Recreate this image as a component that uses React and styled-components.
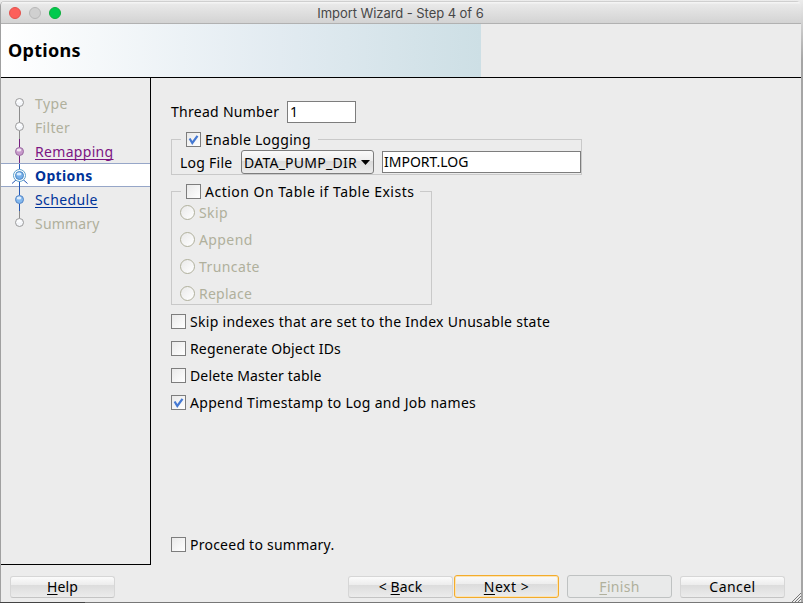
import React from "react";
import styled, { createGlobalStyle, css } from "styled-components";

const Global = createGlobalStyle`
  *, *::before, *::after { box-sizing: border-box; }
  html, body { margin: 0; padding: 0; overflow: hidden; }
  body { background: #cfcfcf; font: 14px/18px "Noto Sans", sans-serif; color: #000; }
`;

const Desktop = styled.div`
  width: 803px;
  height: 603px;
  padding: 1px 2px 1px 0;
  background: linear-gradient(90deg, #444 0 85px, #777 85px) 0 602px / 100% 1px no-repeat,
    linear-gradient(#ececec, #a5a5a5 60px);
`;

const Window = styled.div`
  display: flex;
  flex-direction: column;
  width: 801px;
  height: 601px;
  background: #ececec;
  border-left: 1px solid #a0a0a0;
  border-radius: 5px 5px 0 0;
  overflow: hidden;
  position: relative;
`;

const TitleBar = styled.header`
  flex: none;
  display: grid;
  grid-template-columns: 1fr auto 1fr;
  align-items: center;
  height: 23px;
  padding: 1px 0 0 8px;
  background: linear-gradient(#cfcfcf 0 1px, #f4f4f4 1px 2px, #e9e9e9 3px, #d3d3d3);
  border-bottom: 1px solid #b1b1b1;
`;

const Lights = styled.div`
  display: flex;
  gap: 8px;
`;

const Light = styled.span`
  width: 12px;
  height: 12px;
  border-radius: 50%;
  background: ${(p) => p.$fill};
  border: 1px solid ${(p) => p.$edge};
`;

const WindowTitle = styled.div`
  font: 13px/18px Inter, sans-serif;
  letter-spacing: -0.06px;
  color: #474747;
  margin-right: 9px;
`;

const Banner = styled.div`
  flex: none;
  height: 54px;
  padding: 16px 0 0 7px;
  border-bottom: 1px solid #000;
  background: linear-gradient(90deg, #fff, #e2ebf1 58%, #cddfe5) 0 0 / 480px 100% no-repeat;
`;

const Heading = styled.h1`
  margin: 0;
  font: 700 18px/20px "Noto Sans", sans-serif;
  letter-spacing: 0.3px;
`;

const Body = styled.div`
  flex: none;
  display: flex;
  height: 487px;
`;

const Nav = styled.nav`
  width: 150px;
  padding-top: 13px;
  border: solid #000;
  border-width: 0 1px 1px 0;
`;

const Step = styled.div`
  display: flex;
  height: 24px;
  color: ${(p) => p.$color || "#b0b09c"};
  ${(p) =>
    p.$current &&
    css`
      background: #fff;
      border: solid #96a6c8;
      border-width: 1px 0;
      font-weight: 700;
      svg { margin-top: -1px; }
      span { padding-top: 3px; }
    `}
`;

const StepName = styled.span`
  padding-top: 4px;
  letter-spacing: ${(p) => p.$ls || 0}px;
  text-decoration: ${(p) => (p.$link ? "underline" : "none")};
  text-underline-offset: 2px;
  text-decoration-thickness: 1px;
  text-decoration-skip-ink: none;
`;

const Marker = styled.svg`
  flex: none;
  width: 34px;
  height: 24px;
`;

const Main = styled.main`
  flex: 1;
  padding: 23px 0 0 20px;
`;

const Text = styled.span`
  white-space: pre;
  letter-spacing: ${(p) => p.$ls || 0}px;
  padding-top: ${(p) => (p.$low ? 2 : 0)}px;
`;

const Row = styled.div`
  display: flex;
  align-items: center;
  height: ${(p) => p.$h || 27}px;
  margin-top: ${(p) => p.$mt || 0}px;
  color: ${(p) => (p.$disabled ? "#b0b09c" : "#000")};
`;

const Label = styled(Text)`
  flex: none;
  width: ${(p) => p.$w}px;
`;

const Field = styled.div`
  width: ${(p) => p.$w}px;
  height: 22px;
  padding: 1px 0 0 ${(p) => p.$pl}px;
  margin-left: ${(p) => p.$ml || 0}px;
  background: #fff;
  border: 1px solid #7d7d7d;
`;

const Group = styled.fieldset`
  width: ${(p) => p.$w}px;
  height: ${(p) => p.$h}px;
  margin: 7px 0 0;
  padding: 0 0 0 8px;
  min-width: 0;
  border: 1px solid #c9c9c9;
`;

const Legend = styled.legend`
  display: flex;
  align-items: center;
  height: 18px;
  margin-left: 1px;
  padding: 0 0 0 5px;
  width: ${(p) => p.$w}px;
`;

const Box = styled.span`
  flex: none;
  display: flex;
  width: 15px;
  height: 15px;
  margin-right: 4px;
  border: 1px solid #7d7d7d;
  background: linear-gradient(135deg, #e9e9e9, #fff);
`;

const Radio = styled.span`
  flex: none;
  width: 15px;
  height: 15px;
  margin-right: 4px;
  border-radius: 50%;
  border: 1px solid #b0b09c;
  background: linear-gradient(135deg, #e9e9e9, #fff);
`;

const RadioList = styled.div`
  display: flex;
  flex-direction: column;
  gap: 2px;
`;

const Combo = styled.div`
  display: flex;
  align-items: center;
  width: 133px;
  height: 24px;
  padding-left: 2px;
  border: 1px solid #7d7d7d;
  border-radius: 3px;
  background: linear-gradient(#fafafa, #ececec 45%, #dadada 46%, #ebebeb);
  svg { margin-left: auto; margin-right: 3px; }
`;

const Footer = styled.footer`
  flex: 1;
  display: flex;
  align-items: flex-start;
  padding: 11px 0 0 9px;
`;

const Button = styled.button`
  width: 105px;
  height: 22px;
  padding: 0;
  margin: 0 0 0 ${(p) => p.$ml || 0}px;
  font: 14px/18px "Noto Sans", sans-serif;
  letter-spacing: ${(p) => p.$ls || 0}px;
  color: #000;
  border: 1px solid #d6d6d6;
  border-bottom-color: #c4c4c4;
  border-radius: 3px;
  background: linear-gradient(#fbfbfb, #ededed 38%, #dcdcdc 40%, #ececec);
  u { text-underline-offset: 2px; text-decoration-thickness: 1px; }
  ${(p) =>
    p.$primary &&
    css`
      height: 23px;
      margin-top: -1px;
      border: 1px solid #f3ac2c;
      box-shadow: inset 0 0 0 1px #fbe3b5;
    `}
  ${(p) =>
    p.$disabled &&
    css`
      height: 23px;
      margin-top: -1px;
      color: #b0b09c;
      border-color: #bfc2c2;
      background: #e9eaea;
    `}
`;

const Grip = styled.svg`
  position: absolute;
  right: 0;
  bottom: 0;
  width: 10px;
  height: 10px;
`;

const tones = {
  gray: { line: "#8c8c8c", fill: "#f4f6fa", edge: "#999" },
  purple: { line: "#75207f", fill: "#c79acb", edge: "#9b6da2" },
  blue: { line: "#2457b5", fill: "#83b8ee", edge: "#5686c6" },
};

function StepMarker({ tone, cy = 11.5, up, down }) {
  const { fill, edge } = tones[tone];
  return (
    <Marker viewBox="0 0 34 24">
      {up && <path d={`M18.5 0V${cy - 4}`} stroke={tones[up].line} />}
      {down && <path d={`M18.5 ${cy + 4}V24`} stroke={tones[down].line} />}
      <circle cx="18.5" cy={cy} r="4" fill={fill} stroke={edge} />
      <ellipse cx="18" cy={cy - 1.5} rx="2.4" ry="1.5" fill="#fff" opacity=".75" />
    </Marker>
  );
}

function CurrentMarker() {
  return (
    <Marker viewBox="0 0 34 24">
      <path d="M18.5 1V6M18.5 18V24M11 20.5l4.5-4M26.5 20.5l-4.5-4" stroke="#2457b5" fill="none" />
      <circle cx="18.5" cy="12.5" r="6" fill="#fff" stroke="#5da0cd" />
      <circle cx="18.5" cy="12.5" r="4" fill="#75afea" stroke="#4b89c6" />
      <ellipse cx="18" cy="11" rx="2.5" ry="1.5" fill="#d9edff" />
    </Marker>
  );
}

function Check({ checked }) {
  return (
    <Box>
      {checked && (
        <svg width="13" height="13" viewBox="0 0 13 13">
          <path d="M2.6 5.5L5.3 10L10.5 2.8" fill="none" stroke="#4579d2" strokeWidth="2.2" />
        </svg>
      )}
    </Box>
  );
}

const actions = [
  ["Skip", 0.4],
  ["Append", 0.4],
  ["Truncate", 0.4],
  ["Replace", 0.25],
];

const switches = [
  ["Skip indexes that are set to the Index Unusable state", 0.29, false],
  ["Regenerate Object IDs", 0.15, false],
  ["Delete Master table", 0.14, false],
  ["Append Timestamp to Log and Job names", 0.3, true],
];

export default function App() {
  return (
    <Desktop>
      <Global />
      <Window>
        <TitleBar>
          <Lights>
            <Light $fill="#fc605b" $edge="#e2524d" />
            <Light $fill="#d0d0d0" $edge="#b7b7b7" />
            <Light $fill="#00ca4e" $edge="#0cae3c" />
          </Lights>
          <WindowTitle>Import Wizard - Step 4 of 6</WindowTitle>
        </TitleBar>
        <Banner>
          <Heading>Options</Heading>
        </Banner>
        <Body>
          <Nav>
            <Step><StepMarker tone="gray" down="gray" /><StepName $ls={0.45}>Type</StepName></Step>
            <Step><StepMarker tone="gray" up="gray" down="gray" /><StepName $ls={0.3}>Filter</StepName></Step>
            <Step $color="#7c1583"><StepMarker tone="purple" cy={12.5} up="purple" down="purple" /><StepName $link $ls={0.32}>Remapping</StepName></Step>
            <Step $current $color="#003399"><CurrentMarker /><StepName $ls={0.35}>Options</StepName></Step>
            <Step $color="#003399"><StepMarker tone="blue" cy={12.5} up="blue" down="blue" /><StepName $link $ls={0.38}>Schedule</StepName></Step>
            <Step><StepMarker tone="gray" up="gray" /><StepName $ls={0.2}>Summary</StepName></Step>
          </Nav>
          <Main>
            <Row $h={22}>
              <Label $w={116} $ls={0.28}>Thread Number</Label>
              <Field $w={69} $pl={2}>1</Field>
            </Row>
            <Group $w={411} $h={45}>
              <Legend $w={137}><Check checked /><Text $low $ls={0.28}>Enable Logging</Text></Legend>
              <Row $h={24} $mt={2}>
                <Label $w={61} $low $ls={0.25}>Log File</Label>
                <Combo>
                  <Text $low $ls={0.25}>DATA_PUMP_DIR</Text>
                  <svg width="9" height="5" viewBox="0 0 9 5"><path d="M0 0H9L4.5 5Z" /></svg>
                </Combo>
                <Field $w={199} $ml={8} $pl={1}>IMPORT.LOG</Field>
              </Row>
            </Group>
            <Group $w={261} $h={123}>
              <Legend $w={239}><Check /><Text $low $ls={0.49}>Action On Table if Table Exists</Text></Legend>
              <RadioList>
                {actions.map(([name, ls]) => (
                  <Row key={name} $h={25} $disabled><Radio /><Text $ls={ls}>{name}</Text></Row>
                ))}
              </RadioList>
            </Group>
            {switches.map(([name, ls, on], i) => (
              <Row key={name} $mt={i === 0 ? 3 : 0}><Check checked={on} /><Text $ls={ls}>{name}</Text></Row>
            ))}
            <Row $mt={115}><Check /><Text $ls={0.24}>Proceed to summary.</Text></Row>
          </Main>
        </Body>
        <Footer>
          <Button $ls={0.1}><u>H</u>elp</Button>
          <Button $ml={233} $ls={0.15}>&lt; <u>B</u>ack</Button>
          <Button $ml={1} $primary $ls={0.5}><u>N</u>ext &gt;</Button>
          <Button $ml={8} $disabled $ls={0.3}><u>F</u>inish</Button>
          <Button $ml={8} $ls={0.45}>Cancel</Button>
        </Footer>
        <Grip viewBox="0 0 10 10"><path d="M1 10L10 1M4 10L10 4M7 10L10 7" stroke="#777" /></Grip>
      </Window>
    </Desktop>
  );
}
